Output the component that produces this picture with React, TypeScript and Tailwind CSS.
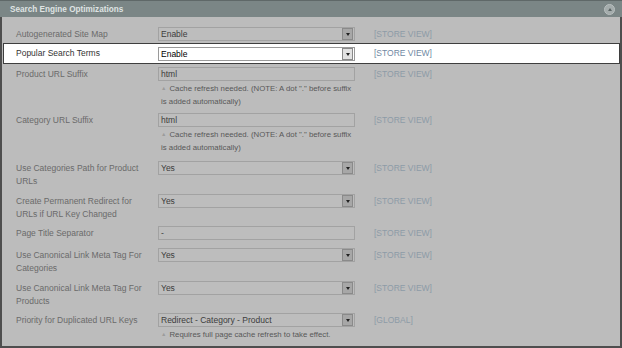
import React from "react";

type Row = {
  label: string[];
  value: string;
  kind: "select" | "input";
  notes?: string[];
  scope: string;
  h: string;
};

const rows: Row[] = [
  {
    label: ["Product URL Suffix"],
    value: "html",
    kind: "input",
    notes: ['Cache refresh needed. (NOTE: A dot "." before suffix', "is added automatically)"],
    scope: "[STORE VIEW]",
    h: "h-[46px]",
  },
  {
    label: ["Category URL Suffix"],
    value: "html",
    kind: "input",
    notes: ['Cache refresh needed. (NOTE: A dot "." before suffix', "is added automatically)"],
    scope: "[STORE VIEW]",
    h: "h-[48px]",
  },
  {
    label: ["Use Categories Path for Product", "URLs"],
    value: "Yes",
    kind: "select",
    scope: "[STORE VIEW]",
    h: "h-[33px]",
  },
  {
    label: ["Create Permanent Redirect for", "URLs if URL Key Changed"],
    value: "Yes",
    kind: "select",
    scope: "[STORE VIEW]",
    h: "h-[32px]",
  },
  {
    label: ["Page Title Separator"],
    value: "-",
    kind: "input",
    scope: "[STORE VIEW]",
    h: "h-[22px]",
  },
  {
    label: ["Use Canonical Link Meta Tag For", "Categories"],
    value: "Yes",
    kind: "select",
    scope: "[STORE VIEW]",
    h: "h-[33px]",
  },
  {
    label: ["Use Canonical Link Meta Tag For", "Products"],
    value: "Yes",
    kind: "select",
    scope: "[STORE VIEW]",
    h: "h-[32px]",
  },
  {
    label: ["Priority for Duplicated URL Keys"],
    value: "Redirect - Category - Product",
    kind: "select",
    notes: ["Requires full page cache refresh to take effect."],
    scope: "[GLOBAL]",
    h: "h-[32px]",
  },
];

const Control = ({ value, kind, active }: { value: string; kind: "select" | "input"; active?: boolean }) => (
  <div
    className={`relative w-[197px] h-[14px] border flex items-center pl-[2px] ${
      active ? "bg-white border-[#9a9a9a] text-black" : "bg-[#bdbdbd] border-[#a2a2a2] text-[#3c3c3c]"
    }`}
  >
    {value}
    {kind === "select" && (
      <div
        className={`absolute right-[1px] top-[0px] w-[11px] h-[12px] border flex items-center justify-center ${
          active ? "bg-[#e2e2e2] border-[#8a8a8a]" : "bg-[#a7a7a7] border-[#8a8a8a]"
        }`}
      >
        <div className="w-0 h-0 border-l-[2.5px] border-r-[2.5px] border-t-[3px] border-l-transparent border-r-transparent border-t-[#222]" />
      </div>
    )}
  </div>
);

export default function App() {
  return (
    <div
      className="w-[622px] h-[348px] bg-[#bcbcbc] flex flex-col text-[8.5px] leading-[13px]"
      style={{ fontFamily: '"Liberation Sans", Arial, sans-serif' }}
    >
      <div className="h-[17px] bg-[#7b8686] border-t border-[#5f6868] flex items-center justify-between pl-[10px] pr-[7px] shrink-0">
        <span className="font-bold text-[8.2px] text-[#dfe3e3]">Search Engine Optimizations</span>
        <div className="w-[11px] h-[11px] rounded-full bg-[#a4acac] border border-[#b9c0c0] flex items-center justify-center">
          <div className="w-0 h-0 border-l-[2.5px] border-r-[2.5px] border-b-[3px] border-l-transparent border-r-transparent border-b-[#5a6464]" />
        </div>
      </div>

      <div className="flex-1 border-l-2 border-r-2 border-b-2 border-[#4e4e4e] pt-[10px] flex flex-col">
        <div className="flex h-[16px]">
          <div className="w-[156px] pl-[14px] text-[#6a6a6a] pt-[1px]">Autogenerated Site Map</div>
          <Control value="Enable" kind="select" />
          <div className="ml-[19px] text-[#8d9ba7] pt-[1px]">[STORE VIEW]</div>
        </div>

        <div className="ml-[1px] h-[21px] bg-white border border-[#3e3e3e] flex items-start pt-[3px]">
          <div className="w-[154px] pl-[12px] text-[#333] pt-[0px]">Popular Search Terms</div>
          <Control value="Enable" kind="select" active />
          <div className="ml-[19px] text-[#7088a2]">[STORE VIEW]</div>
        </div>

        <div className="h-[3px]" />

        {rows.map((r, i) => (
          <div key={i} className={`flex ${r.h}`}>
            <div className="w-[156px] pl-[14px] text-[#6a6a6a] pt-[1px]">
              {r.label.map((l, j) => (
                <div key={j}>{l}</div>
              ))}
            </div>
            <div className="w-[197px] flex flex-col shrink-0">
              <Control value={r.value} kind={r.kind} />
              {r.notes && (
                <div className="pl-[3px] text-[#585858] text-[7.8px] pt-[1px] whitespace-nowrap">
                  {r.notes.map((n, j) => (
                    <div key={j} className="flex items-center">
                      {j === 0 && <span className="text-[#9c9c9c] text-[5.5px] mr-[3px]">▲</span>}
                      {n}
                    </div>
                  ))}
                </div>
              )}
            </div>
            <div className="ml-[19px] text-[#8d9ba7] pt-[1px]">{r.scope}</div>
          </div>
        ))}
      </div>
    </div>
  );
}
